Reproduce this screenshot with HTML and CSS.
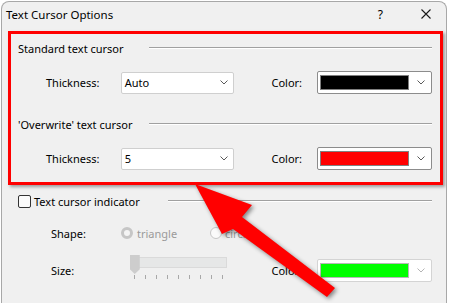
FILE: index.html
```html
<!DOCTYPE html>
<html lang="en">
<head>
    <meta charset="UTF-8">
    <title>Text Cursor Options</title>
    <link rel="stylesheet" href="styles.css">
</head>
<body>
    <div class="window">
        <div class="titlebar">
            <span class="title">Text Cursor Options</span>
            <span class="help">?</span>
            <svg class="close" width="10" height="10" viewBox="0 0 10 10">
                <path d="M0.5 0.5 L9.5 9.5 M9.5 0.5 L0.5 9.5" stroke="#1a1a1a" stroke-width="1.1" fill="none"/>
            </svg>
        </div>

        <div class="highlight">
            <div class="legend">
                <span class="legend-text">Standard text cursor</span>
                <span class="rule"></span>
            </div>
            <div class="row">
                <span class="label">Thickness:</span>
                <div class="combo">
                    <span class="combo-text">Auto</span>
                    <svg class="chevron" width="8" height="5" viewBox="0 0 8 5"><path d="M0.5 0.5 L4 4 L7.5 0.5" stroke="#5a5a5a" fill="none"/></svg>
                </div>
                <span class="label color-label">Color:</span>
                <div class="combo color-combo">
                    <span class="swatch swatch-black"></span>
                    <svg class="chevron" width="8" height="5" viewBox="0 0 8 5"><path d="M0.5 0.5 L4 4 L7.5 0.5" stroke="#5a5a5a" fill="none"/></svg>
                </div>
            </div>

            <div class="legend legend-second">
                <span class="legend-text">'Overwrite' text cursor</span>
                <span class="rule"></span>
            </div>
            <div class="row">
                <span class="label">Thickness:</span>
                <div class="combo">
                    <span class="combo-text">5</span>
                    <svg class="chevron" width="8" height="5" viewBox="0 0 8 5"><path d="M0.5 0.5 L4 4 L7.5 0.5" stroke="#5a5a5a" fill="none"/></svg>
                </div>
                <span class="label color-label">Color:</span>
                <div class="combo color-combo">
                    <span class="swatch swatch-red"></span>
                    <svg class="chevron" width="8" height="5" viewBox="0 0 8 5"><path d="M0.5 0.5 L4 4 L7.5 0.5" stroke="#5a5a5a" fill="none"/></svg>
                </div>
            </div>
        </div>

        <div class="indicator">
            <div class="legend">
                <span class="checkbox"></span>
                <span class="legend-text check-text">Text cursor indicator</span>
                <span class="rule"></span>
            </div>
            <div class="row shape-row">
                <span class="label shape-label">Shape:</span>
                <span class="option option-first">
                    <span class="radio radio-on"></span>
                    <span class="muted">triangle</span>
                </span>
                <span class="option">
                    <span class="radio"></span>
                    <span class="muted">circle</span>
                </span>
            </div>
            <div class="row size-row">
                <span class="label size-label">Size:</span>
                <div class="slider">
                    <div class="track">
                        <span class="thumb"></span>
                    </div>
                    <div class="ticks">
                        <span></span><span></span><span></span><span></span><span></span>
                        <span></span><span></span><span></span><span></span>
                    </div>
                </div>
                <span class="label color-label size-color">Color:</span>
                <div class="combo color-combo combo-disabled">
                    <span class="swatch swatch-green"></span>
                    <svg class="chevron" width="8" height="5" viewBox="0 0 8 5"><path d="M0.5 0.5 L4 4 L7.5 0.5" stroke="#b4b4b4" fill="none"/></svg>
                </div>
            </div>
        </div>
    </div>

    <!-- annotation arrow drawn over the dialog -->
    <svg class="arrow" width="449" height="303" viewBox="0 0 449 303">
        <polygon points="195,184 252,205 242,217 335,288 327,297 233,229 222,234" fill="#ff0000"/>
    </svg>
</body>
</html>
```

FILE: styles.css
```css
body {
    margin: 0;
    background-color: #fff;
    font-family: "Noto Sans", "Open Sans", sans-serif;
    font-size: 11px;
    color: #000;
    position: relative;
    width: 449px;
    height: 303px;
    overflow: hidden;
}
.window {
    margin: 1px 0 0 1px;
    width: 446px;
    height: 302px;
    box-sizing: border-box;
    border: 1px solid #a8a8a8;
    border-bottom: none;
    border-radius: 8px 8px 0 0;
    background-color: #f0f0f0;
    overflow: hidden;
}
.titlebar {
    display: flex;
    align-items: center;
    height: 24px;
    padding-left: 4px;
}
.title {
    flex: 1;
    font-size: 11.5px;
}
.help {
    margin-right: 38px;
    font-size: 12px;
}
.close {
    margin-right: 15px;
}
.highlight {
    margin: 5px 0 0 6px;
    width: 435px;
    height: 154px;
    box-sizing: border-box;
    border: 3px solid #ff0000;
    box-shadow: 2px 2px 3px rgba(0, 0, 0, 0.35);
    padding: 4px 8px 0 7px;
}
.legend {
    display: flex;
    align-items: center;
    height: 20px;
}
.legend-second {
    margin-top: 20px;
}
.legend-text {
    width: 131px;
    white-space: nowrap;
}
.rule {
    flex: 1;
    height: 0;
    border-top: 1px solid #a0a0a0;
    border-bottom: 1px solid #fff;
}
.row {
    display: flex;
    align-items: center;
    height: 23px;
    margin-top: 13px;
    padding-left: 28px;
}
.label {
    width: 75px;
    white-space: nowrap;
}
.color-label {
    width: 46px;
    margin-left: 37px;
}
.combo {
    display: flex;
    align-items: center;
    justify-content: space-between;
    width: 114px;
    height: 22px;
    box-sizing: border-box;
    padding: 0 5px 0 3px;
    background-color: #fff;
    border: 1px solid #cfcfcf;
    border-radius: 2px;
}
.color-combo {
    width: 115px;
    height: 23px;
    padding: 0 6px 0 2px;
    border-color: #8c8c8c;
}
.combo-disabled {
    border-color: #d4d4d4;
}
.swatch {
    width: 89px;
    height: 15px;
    box-sizing: border-box;
    border: 1px solid #808080;
}
.swatch-black {
    background-color: #000;
}
.swatch-red {
    background-color: #ff0000;
}
.swatch-green {
    background-color: #00ff00;
    border-color: #b8b8b8;
}
.indicator {
    padding: 6px 14px 0 16px;
}
.checkbox {
    width: 13px;
    height: 13px;
    box-sizing: border-box;
    border: 1px solid #333;
    border-radius: 2px;
    background-color: #fafafa;
    margin-right: 3px;
}
.check-text {
    width: 134px;
}
.shape-row {
    height: 20px;
    margin-top: 12px;
    padding-left: 33px;
}
.shape-label {
    width: 70px;
}
.option {
    display: flex;
    align-items: center;
}
.option-first {
    width: 89px;
}
.radio {
    width: 12px;
    height: 12px;
    box-sizing: border-box;
    border-radius: 50%;
    border: 1px solid #c6c6c6;
    background-color: #fafafa;
    margin-right: 3px;
}
.radio-on {
    border: 3px solid #c6c6c6;
    background-color: #f4f4f4;
    margin-right: 4px;
}
.muted {
    color: #9a9a9a;
}
.size-row {
    height: 26px;
    margin-top: 14px;
    padding-left: 33px;
}
.size-label {
    width: 79px;
}
.slider {
    width: 98px;
    height: 26px;
}
.track {
    position: relative;
    height: 11px;
    box-sizing: border-box;
    background-color: #e6e7e7;
    border: 1px solid #dadada;
}
.thumb {
    position: absolute;
    left: -1px;
    top: -3px;
    width: 10px;
    height: 19px;
    background-color: #cdcdcd;
    clip-path: polygon(0 0, 100% 0, 100% 75%, 50% 100%, 0 75%);
}
.ticks {
    display: flex;
    gap: 10px;
    padding-left: 4px;
    margin-top: 7px;
}
.ticks span {
    width: 1px;
    height: 4px;
    background-color: #a8a8a8;
}
.size-color {
    margin-left: 44px;
}
.arrow {
    position: absolute;
    left: 0;
    top: 0;
    filter: drop-shadow(2px 2px 2px rgba(0, 0, 0, 0.45));
}
```
